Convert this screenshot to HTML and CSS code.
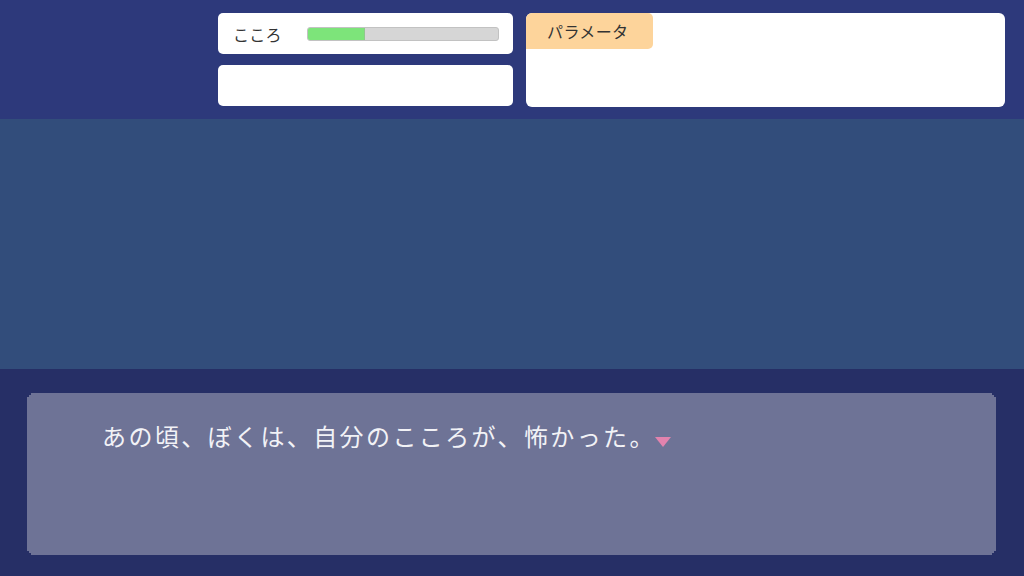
FILE: index.html
```html
<!DOCTYPE html>
<html lang="ja">
<head>
<meta charset="utf-8">
<link rel="stylesheet" href="styles.css">
</head>
<body>
<div class="screen">
  <header class="hud">
    <div class="hud-left">
      <div class="card status">
        <span class="label">こころ</span>
        <div class="bar"><div class="fill" style="width:30%"></div></div>
      </div>
      <div class="card"></div>
    </div>
    <div class="card params">
      <div class="tag">パラメータ</div>
    </div>
  </header>
  <main class="stage"></main>
  <footer class="message-area">
    <div class="dialog">
      <p class="line">あの頃、ぼくは、自分のこころが、怖かった。<span class="next"></span></p>
    </div>
  </footer>
</div>
</body>
</html>
```
FILE: styles.css
```css
* { box-sizing: border-box; }
html, body { margin: 0; padding: 0; }
body {
  width: 1024px;
  height: 576px;
  overflow: hidden;
  font-family: "Noto Sans CJK JP", "Noto Sans", sans-serif;
}
.screen {
  display: flex;
  flex-direction: column;
  height: 576px;
}
.hud {
  height: 119px;
  background: #2d397b;
  display: flex;
  padding: 13px 19px 0 218px;
  gap: 13px;
}
.hud-left {
  width: 295px;
  display: flex;
  flex-direction: column;
  gap: 11px;
}
.card {
  background: #ffffff;
  border-radius: 5px;
  height: 41px;
}
.status {
  display: flex;
  align-items: center;
  padding: 0 14px 0 15px;
}
.label {
  font-size: 16px;
  color: #333;
  width: 74px;
  letter-spacing: 0.3px;
}
.bar {
  width: 192px;
  height: 14px;
  background: #d6d6d6;
  border: 1px solid #c2c2c2;
  border-radius: 3px;
  overflow: hidden;
}
.fill {
  height: 100%;
  background: #7de47a;
  border-right: 1px solid #8fc98c;
}
.params {
  flex: 1;
  height: 94px;
  border-radius: 6px;
  overflow: hidden;
}
.tag {
  width: 127px;
  height: 36px;
  background: #fdd49b;
  border-radius: 0 5px 5px 0;
  font-size: 16px;
  color: #333;
  display: flex;
  align-items: center;
  padding-left: 21px;
  letter-spacing: 0.4px;
}
.stage {
  height: 250px;
  background: #324d7b;
}
.message-area {
  flex: 1;
  background: #262f66;
  padding: 24px 28px 21px 27px;
}
.dialog {
  height: 162px;
  background: #6e7396;
  clip-path: polygon(0 4px, 2px 4px, 2px 2px, 4px 2px, 4px 0, calc(100% - 4px) 0, calc(100% - 4px) 2px, calc(100% - 2px) 2px, calc(100% - 2px) 4px, 100% 4px, 100% calc(100% - 4px), calc(100% - 2px) calc(100% - 4px), calc(100% - 2px) calc(100% - 2px), calc(100% - 4px) calc(100% - 2px), calc(100% - 4px) 100%, 4px 100%, 4px calc(100% - 2px), 2px calc(100% - 2px), 2px calc(100% - 4px), 0 calc(100% - 4px));
  padding: 27px 0 0 75px;
}
.line {
  margin: 0;
  font-size: 24px;
  line-height: 32px;
  color: #f2f2f6;
  letter-spacing: 2.4px;
}
.next {
  display: inline-block;
  width: 0;
  height: 0;
  border-left: 8px solid transparent;
  border-right: 8px solid transparent;
  border-top: 10px solid #e283ae;
  margin-left: -1px;
  vertical-align: -1px;
}
```
